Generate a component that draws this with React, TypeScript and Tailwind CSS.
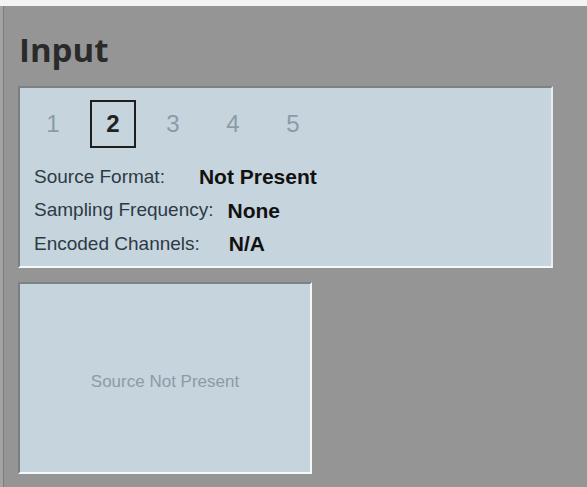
import React from 'react';

type InfoRow = { label: string; value: string; gap: string };

const channels = [1, 2, 3, 4, 5];
const activeChannel = 2;

const rows: InfoRow[] = [
  { label: 'Source Format:', value: 'Not Present', gap: 'ml-[34px]' },
  { label: 'Sampling Frequency:', value: 'None', gap: 'ml-[14px]' },
  { label: 'Encoded Channels:', value: 'N/A', gap: 'ml-[29px]' },
];

function ChannelTabs() {
  return (
    <div className="flex items-center gap-[14px] pl-[10px] h-[48px]">
      {channels.map(n =>
        n === activeChannel ? (
          <div
            key={n}
            className="w-[46px] h-[48px] flex items-center justify-center border-2 border-[#1e1e1e] text-[24px] font-semibold text-[#222]"
          >
            {n}
          </div>
        ) : (
          <div key={n} className="w-[46px] h-[48px] flex items-center justify-center text-[24px] font-light text-[#8d9ba6]">
            {n}
          </div>
        )
      )}
    </div>
  );
}

export default function App() {
  return (
    <div className="w-[587px] h-[487px] bg-[#f3f3f3] pt-[6px] overflow-hidden">
      <div className="h-full bg-[#a3a3a3] pl-[3px]">
        <div className="h-full bg-[#959595] border-l border-[#7b7b7b] pl-[14px] pr-[34px] pt-[24px] font-['Liberation_Sans',Arial,sans-serif]">
          <h1 className="font-['Open_Sans',sans-serif] font-bold text-[33px] leading-[40px] text-[#2a2a2a] pl-[1px]">Input</h1>

          <div className="mt-[16px] h-[182px] bg-[#c6d4dd] border-2 border-t-[#7d8284] border-l-[#7a7f82] border-r-[#e8eef1] border-b-[#f6f8f9] pt-[12px]">
            <ChannelTabs />
            <div className="mt-[12px] pl-[14px]">
              {rows.map(r => (
                <div key={r.label} className="flex items-center h-[33.5px]">
                  <span className="text-[19px] text-[#2c3a45]">{r.label}</span>
                  <span className={`${r.gap} text-[21px] font-bold text-[#111]`}>{r.value}</span>
                </div>
              ))}
            </div>
          </div>

          <div className="mt-[14px] w-[294px] h-[192px] bg-[#c6d4dd] border-2 border-t-[#7d8284] border-l-[#7a7f82] border-r-[#f4f7f8] border-b-[#f6f8f9] flex items-center justify-center pt-[8px]">
            <span className="text-[17px] text-[#8d9ba6]">Source Not Present</span>
          </div>
        </div>
      </div>
    </div>
  );
}
